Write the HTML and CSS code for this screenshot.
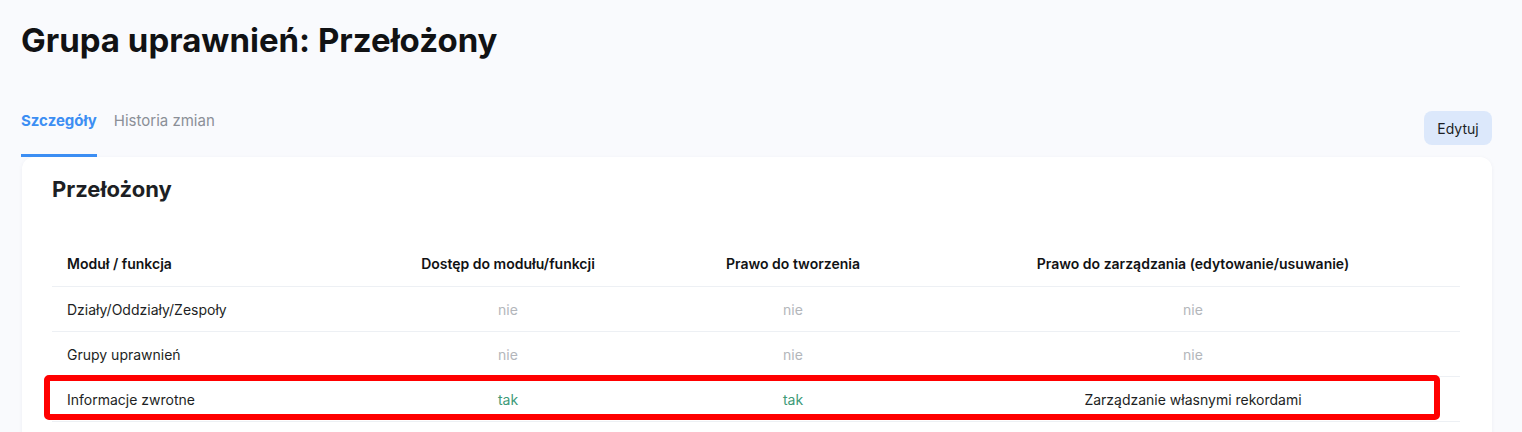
FILE: index.html
```html
<!DOCTYPE html>
<html lang="pl">
<head>
<meta charset="utf-8">
<title>Grupa uprawnień: Przełożony</title>
<link rel="stylesheet" href="styles.css">
</head>
<body>
<div class="page">
  <h1 class="title">Grupa uprawnień: Przełożony</h1>
  <div class="tabbar">
    <div class="tabs">
      <div class="tab active">Szczegóły</div>
      <div class="tab">Historia zmian</div>
    </div>
    <button class="btn">Edytuj</button>
  </div>
  <div class="card">
    <h2 class="card-title">Przełożony</h2>
    <div class="table-wrap">
      <table class="perm">
        <colgroup>
          <col class="c1"><col class="c2"><col class="c3"><col class="c4">
        </colgroup>
        <thead>
          <tr>
            <th class="left">Moduł / funkcja</th>
            <th>Dostęp do modułu/funkcji</th>
            <th>Prawo do tworzenia</th>
            <th>Prawo do zarządzania (edytowanie/usuwanie)</th>
          </tr>
        </thead>
        <tbody>
          <tr>
            <td class="left">Działy/Oddziały/Zespoły</td>
            <td class="no">nie</td>
            <td class="no">nie</td>
            <td class="no">nie</td>
          </tr>
          <tr>
            <td class="left">Grupy uprawnień</td>
            <td class="no">nie</td>
            <td class="no">nie</td>
            <td class="no">nie</td>
          </tr>
          <tr>
            <td class="left">Informacje zwrotne</td>
            <td class="yes">tak</td>
            <td class="yes">tak</td>
            <td class="val">Zarządzanie własnymi rekordami</td>
          </tr>
        </tbody>
      </table>
      <div class="highlight"></div>
    </div>
  </div>
</div>
</body>
</html>
```

FILE: styles.css
```css
* { box-sizing: border-box; }
html, body {
  margin: 0;
  padding: 0;
  background: #f9fafd;
  font-family: Inter, "Noto Sans", sans-serif;
  color: #1d1f24;
  overflow: hidden;
}
.page {
  padding: 20px 30px 0 21px;
}
.title {
  margin: 0;
  font-size: 33px;
  font-weight: 700;
  line-height: 40px;
  color: #111214;
}
.tabbar {
  display: flex;
  justify-content: space-between;
  align-items: flex-end;
  margin-top: 51px;
}
.tabs {
  display: flex;
  gap: 17px;
}
.tab {
  font-size: 15px;
  line-height: 20px;
  color: #8b8f97;
  padding-bottom: 23px;
  border-bottom: 3px solid transparent;
}
.tab.active {
  color: #3c8ef3;
  font-weight: 700;
  border-bottom-color: #3c8ef3;
}
.btn {
  font-family: inherit;
  font-size: 14px;
  color: #1d1f24;
  background: #dce8fb;
  border: none;
  border-radius: 8px;
  height: 34px;
  width: 68px;
  padding: 0;
  margin-bottom: 12px;
}
.card {
  background: #ffffff;
  border-radius: 12px;
  box-shadow: 0 1px 4px rgba(30, 40, 80, 0.05);
  margin-left: 1px;
  width: 1470px;
  padding: 18px 31px 20px 30px;
  height: 300px;
}
.card-title {
  margin: 0;
  font-size: 22px;
  font-weight: 700;
  line-height: 28px;
  color: #1d1f24;
}
.table-wrap {
  position: relative;
  margin-top: 38px;
}
.perm {
  border-collapse: collapse;
  width: 1408px;
  table-layout: fixed;
  font-size: 14px;
}
.c1 { width: 304px; }
.c2 { width: 304px; }
.c3 { width: 266px; }
.c4 { width: 534px; }
.perm th {
  font-weight: 600;
  text-align: center;
  height: 45px;
  padding: 0 15px 0;
  color: #111214;
  border-bottom: 1px solid #edf0f4;
}
.perm td {
  text-align: center;
  height: 45px;
  padding: 1px 15px 0;
  border-bottom: 1px solid #edf0f4;
}
.perm .left { text-align: left; }
.perm td.no { color: #b3b6bb; }
.perm td.yes { color: #3d9a78; }
.perm td.val { color: #1d1f24; }
.highlight {
  position: absolute;
  left: -8px;
  top: 134px;
  width: 1396px;
  height: 45px;
  border: 6px solid #ff0000;
  border-radius: 5px;
  pointer-events: none;
}
```
